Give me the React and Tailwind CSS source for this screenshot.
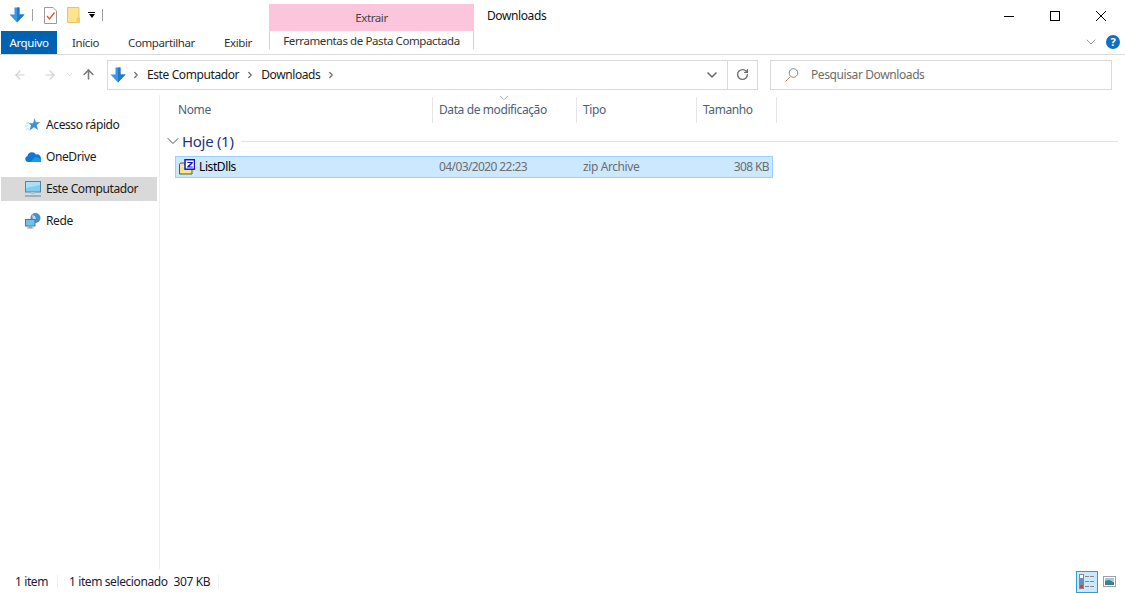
import { ChevronDown, ChevronRight, RotateCw, ArrowLeft, ArrowRight, ArrowUp } from 'lucide-react'

function DownArrow({ className }) {
  return (
    <svg className={className} viewBox="0 0 16 16">
      <path d="M5.500 0.500h5v7h5l-7.500 8l-7.500-8h5z" fill="#3a97e6" />
      <path d="M8 0.500h2.500v7h5l-7.500 8z" fill="#2079cc" />
    </svg>
  )
}

function NoteIcon() {
  return (
    <svg className="w-[13px] h-[17px]" viewBox="0 0 13 17">
      <path d="M.5.5h8.500l3.500 3.500v12.500h-12z" fill="#fff" stroke="#9a9a9a" />
      <path d="M3 9l2.500 3l5-6.500" fill="none" stroke="#e2562a" strokeWidth="1.300" />
    </svg>
  )
}

function FolderIcon() {
  return (
    <svg className="w-[13px] h-[16px]" viewBox="0 0 13 16">
      <path d="M.5.500h11.500v15h-11.500z" fill="#ffe38f" stroke="#e6c560" />
      <path d="M10 11h2.500v4.500h-2.500z" fill="#f3cf6b" stroke="#e6c560" strokeWidth="0.700" />
    </svg>
  )
}

function StarIcon() {
  return (
    <svg className="w-4 h-4" viewBox="0 0 16 16">
      <path d="M9.500 1l1.300 4.200h4.500l-3.600 2.800 1.300 5-4-2.800-4.500 3.300 1.500-5.200-2.500-2.100h4.700z" fill="#3d8fd8" />
      <path d="M1 6h3M0 9h3M1 12h2.500" stroke="#a9d2f2" strokeWidth="1" />
    </svg>
  )
}

function CloudIcon() {
  return (
    <svg className="w-4 h-[10px]" viewBox="0 0 16 10">
      <path d="M3 10a3 3 0 0 1-.5-5.900a4.500 4.500 0 0 1 8.400-1.500a3.500 3.500 0 0 1 4.900 3.400a2 2 0 0 1-.8 4z" fill="#0f78d4" />
      <path d="M6 10l3.500-4.500l2-.3l3.600 1.200a2 2 0 0 1-.6 3.600z" fill="#1c9ae6" />
    </svg>
  )
}

function MonitorIcon() {
  return (
    <svg className="w-4 h-4" viewBox="0 0 16 16">
      <rect x="0.500" y="0.500" width="15" height="10.500" fill="#7fcdf0" stroke="#4f87a8" />
      <path d="M1 1h14v3l-14 3z" fill="#a8e0f7" />
      <path d="M6 11h4v2h-4z" fill="#b4c2cc" />
      <path d="M0 15h16" stroke="#8b9fb0" strokeWidth="1.500" />
    </svg>
  )
}

function NetworkIcon() {
  return (
    <svg className="w-4 h-4" viewBox="0 0 16 16">
      <circle cx="10.500" cy="5" r="5" fill="#4b8fc9" />
      <path d="M7 2l3 1l1 3l-3 1z" fill="#b9d9ef" />
      <rect x="0.500" y="6.500" width="9.500" height="6.500" fill="#6fc3ea" stroke="#3f7da3" />
      <path d="M4 13h2.500v1.500h-2.500zM2 15h6.500" stroke="#8b9fb0" fill="#b4c2cc" />
    </svg>
  )
}

function ZipIcon() {
  return (
    <svg className="w-4 h-4" viewBox="0 0 16 16">
      <path d="M.5 5.500l1-1.500h4l1 1.500h6.500v9.500h-12.500z" fill="#f6e58a" stroke="#5f5730" />
      <path d="M1.500 7h11v1h-11z" fill="#fff7c4" />
      <rect x="6" y="0.700" width="9.500" height="9.500" fill="#fff" stroke="#1414d8" strokeWidth="1.500" />
      <path d="M8.300 3h5.500v1.200l-3.500 3.300h3.500v1h-5.500v-1.200l3.500-3.300h-3.500z" fill="#1414d8" />
    </svg>
  )
}

function SearchIcon() {
  return (
    <svg className="w-[14px] h-[14px]" viewBox="0 0 14 14">
      <circle cx="8.500" cy="5" r="4.300" fill="none" stroke="#8a8a8a" />
      <path d="M5.500 8.500l-5 5" stroke="#b08a6a" />
    </svg>
  )
}

function DetailsIcon() {
  return (
    <svg className="w-[16px] h-[16px]" viewBox="0 0 16 16">
      <rect x="0.500" y="0.500" width="4" height="4" fill="#fff" stroke="#888" />
      <rect x="0.500" y="5.500" width="4" height="4" fill="#5a8fe0" stroke="#888" />
      <rect x="0.500" y="10.500" width="4" height="4" fill="#d84040" stroke="#888" />
      <path d="M6 2.500h4M11 2.500h4M6 7.500h4M11 7.500h4M6 12.500h4M11 12.500h4" stroke="#888" />
    </svg>
  )
}

function LargeIcon() {
  return (
    <svg className="w-[13px] h-[11px]" viewBox="0 0 13 11">
      <rect x="0.500" y="0.500" width="12" height="10" fill="#fff" stroke="#a0a0a0" />
      <path d="M2 2h9v3h-9z" fill="#9cc7e8" />
      <path d="M2 5l4-1l5 2v3h-9z" fill="#3f7f86" />
    </svg>
  )
}

function NavItem({ icon, label, selected }) {
  return (
    <div className={`flex items-center h-6 ml-px w-[156px] pl-[24px] gap-[5px] text-[#1a1a1a] ${selected ? 'bg-[#d9d9d9]' : ''}`}>
      <span className="w-4 flex justify-center">{icon}</span>
      <span>{label}</span>
    </div>
  )
}

function ColHead({ label, width, first }) {
  return (
    <div className={`h-[26px] border-r border-[#e5e5e5] flex items-center text-[#4c607a] shrink-0 ${first ? 'pl-[5px]' : 'pl-[6px]'}`} style={{ width }}>
      {label}
    </div>
  )
}

export default function App() {
  return (
    <div className="w-[1125px] h-[593px] bg-white flex flex-col overflow-hidden text-[12px] font-['Noto_Sans','Open_Sans',sans-serif] tracking-[-0.4px]">
      {/* ribbon */}
      <div className="flex h-[55px] border-b border-[#dadbdc] shrink-0">
        <div className="w-[269px] flex flex-col">
          <div className="h-[31px] flex items-center pl-[9px] pb-[1px]">
            <DownArrow className="w-4 h-4" />
            <div className="w-px h-3 bg-[#a0a0a0] ml-[7px] mr-[11px]" />
            <NoteIcon />
            <div className="ml-[10px]"><FolderIcon /></div>
            <div className="ml-[8px] flex flex-col items-center gap-[1px]">
              <div className="w-[7px] h-px bg-black" />
              <div className="w-0 h-0 border-x-[3.500px] border-x-transparent border-t-[4px] border-t-black" />
            </div>
            <div className="w-px h-3 bg-[#a0a0a0] ml-[7px]" />
          </div>
          <div className="flex items-stretch h-[23px] pl-px text-[#333] text-[11.5px]">
            <div className="w-[56px] bg-[#0063b1] text-white flex items-center justify-center">Arquivo</div>
            <div className="w-[57px] flex items-center justify-center">Início</div>
            <div className="w-[95px] flex items-center justify-center">Compartilhar</div>
            <div className="w-[58px] flex items-center justify-center">Exibir</div>
          </div>
        </div>
        <div className="w-[205px] flex flex-col pt-1 text-[11.5px]">
          <div className="h-[27px] bg-[#fdc5dc] flex items-center justify-center text-[#444] pt-[1px]">Extrair</div>
          <div className="h-[18px] border-x border-[#d0d0d0] flex items-center justify-center text-[#333] pt-[1px]">Ferramentas de Pasta Compactada</div>
        </div>
        <div className="flex-1 flex flex-col relative">
          <div className="h-[31px] flex items-center pl-[13px] text-[#111]">Downloads</div>
          <div className="absolute top-0 right-[1px] flex h-[31px] items-center text-black">
            <div className="w-[46px] flex justify-center">
              <svg className="w-[10px] h-[10px]" viewBox="0 0 10 10"><path d="M0 5.500h10" stroke="#000" /></svg>
            </div>
            <div className="w-[46px] flex justify-center">
              <svg className="w-[10px] h-[10px]" viewBox="0 0 10 10"><rect x="0.500" y="0.500" width="9" height="9" fill="none" stroke="#000" /></svg>
            </div>
            <div className="w-[46px] flex justify-center">
              <svg className="w-[10px] h-[10px]" viewBox="0 0 10 10"><path d="M0 0l10 10M10 0l-10 10" stroke="#000" /></svg>
            </div>
          </div>
          <div className="flex-1 flex items-center justify-end pr-[5px] gap-[7px] pb-[1px]">
            <ChevronDown size={16} strokeWidth={1.300} className="text-[#8a8a8a]" />
            <div className="w-[14px] h-[14px] rounded-full bg-[#0f6fc6] text-white font-bold text-[11px] flex items-center justify-center">?</div>
          </div>
        </div>
      </div>

      {/* address row */}
      <div className="flex items-center h-[40px] shrink-0 pb-[1px]">
        <div className="w-[107px] flex items-center pl-[13px] text-[#d0d0d0]">
          <ArrowLeft size={14} />
          <ArrowRight size={14} className="ml-[16px]" />
          <ChevronDown size={9} className="ml-[8px]" />
          <ArrowUp size={15} strokeWidth={2.500} className="ml-[7px] text-[#7a7a7a]" />
        </div>
        <div className="w-[651px] h-[30px] border border-[#d9d9d9] flex items-center">
          <DownArrow className="w-4 h-4 ml-[2px]" />
          <ChevronRight size={10} strokeWidth={3} className="text-[#6d6d6d] ml-[5px]" />
          <span className="ml-[6px] text-[#1a1a1a]">Este Computador</span>
          <ChevronRight size={10} strokeWidth={3} className="text-[#6d6d6d] ml-[6px]" />
          <span className="ml-[6px] text-[#1a1a1a]">Downloads</span>
          <ChevronRight size={10} strokeWidth={3} className="text-[#6d6d6d] ml-[6px]" />
          <div className="flex-1 flex justify-end pr-[7px]">
            <ChevronDown size={16} strokeWidth={2.500} className="text-[#6d6d6d]" />
          </div>
          <div className="w-[30px] h-full border-l border-[#d9d9d9] flex items-center justify-center">
            <RotateCw size={13} strokeWidth={2.500} className="text-[#6d6d6d]" />
          </div>
        </div>
        <div className="ml-[12px] w-[342px] h-[30px] border border-[#d9d9d9] flex items-center pl-[14px] text-[#6d6d6d]">
          <SearchIcon />
          <span className="ml-[12px]">Pesquisar Downloads</span>
        </div>
      </div>

      {/* body */}
      <div className="flex-1 flex min-h-0">
        <div className="w-[160px] border-r border-[#f0f0f0] pt-[18px] flex flex-col gap-2 shrink-0 mb-[1px]">
          <NavItem icon={<StarIcon />} label="Acesso rápido" />
          <NavItem icon={<CloudIcon />} label="OneDrive" />
          <NavItem icon={<MonitorIcon />} label="Este Computador" selected />
          <NavItem icon={<NetworkIcon />} label="Rede" />
        </div>
        <div className="flex-1 relative">
          <div className="flex h-[26px] mt-[2px] pl-[13px]">
            <ColHead label="Nome" width={260} first />
            <ColHead label="Data de modificação" width={144} />
            <ColHead label="Tipo" width={120} />
            <ColHead label="Tamanho" width={80} />
          </div>
          <ChevronDown size={14} strokeWidth={1} className="absolute top-[-4px] left-[337px] text-[#777]" />
          <div className="flex items-center h-[20px] mt-[8px] pl-[3px]">
            <ChevronDown size={20} strokeWidth={1.200} className="text-[#555]" />
            <span className="ml-[-1px] text-[15px] tracking-[-0.3px] text-[#1e3287]">Hoje (1)</span>
            <div className="flex-1 h-px bg-[#e2e2e2] ml-[7px] mr-[7px]" />
          </div>
          <div className="ml-[15px] w-[598px] h-[22px] mt-[5px] bg-[#cce8ff] border border-[#99d1ff] flex items-center text-[#6d6d6d]">
            <div className="w-[257px] flex items-center pl-[3px] text-black gap-[4px]">
              <ZipIcon />
              <span>ListDlls</span>
            </div>
            <div className="w-[144px] pl-[6px] tracking-[-0.6px]">04/03/2020 22:23</div>
            <div className="w-[120px] pl-[6px]">zip Archive</div>
            <div className="flex-1 text-right pr-[3px] tracking-[-0.6px]">308 KB</div>
          </div>
        </div>
      </div>

      {/* status bar */}
      <div className="h-[23px] flex items-center shrink-0 text-[#1a1a3a] pr-[9px]">
        <div className="w-[58px] pl-[15px] border-r border-[#eeeeee] h-[14px] flex items-center">1 item</div>
        <div className="pl-[11px] w-[161px] border-r border-[#eeeeee] h-[14px] flex items-center gap-[6px]">
          <span>1 item selecionado</span>
          <span>307 KB</span>
        </div>
        <div className="flex-1" />
        <div className="w-[22px] h-[22px] bg-[#cce8ff] border border-[#26a0da] flex items-center justify-center">
          <DetailsIcon />
        </div>
        <div className="ml-[5px] flex items-center"><LargeIcon /></div>
      </div>
    </div>
  )
}
